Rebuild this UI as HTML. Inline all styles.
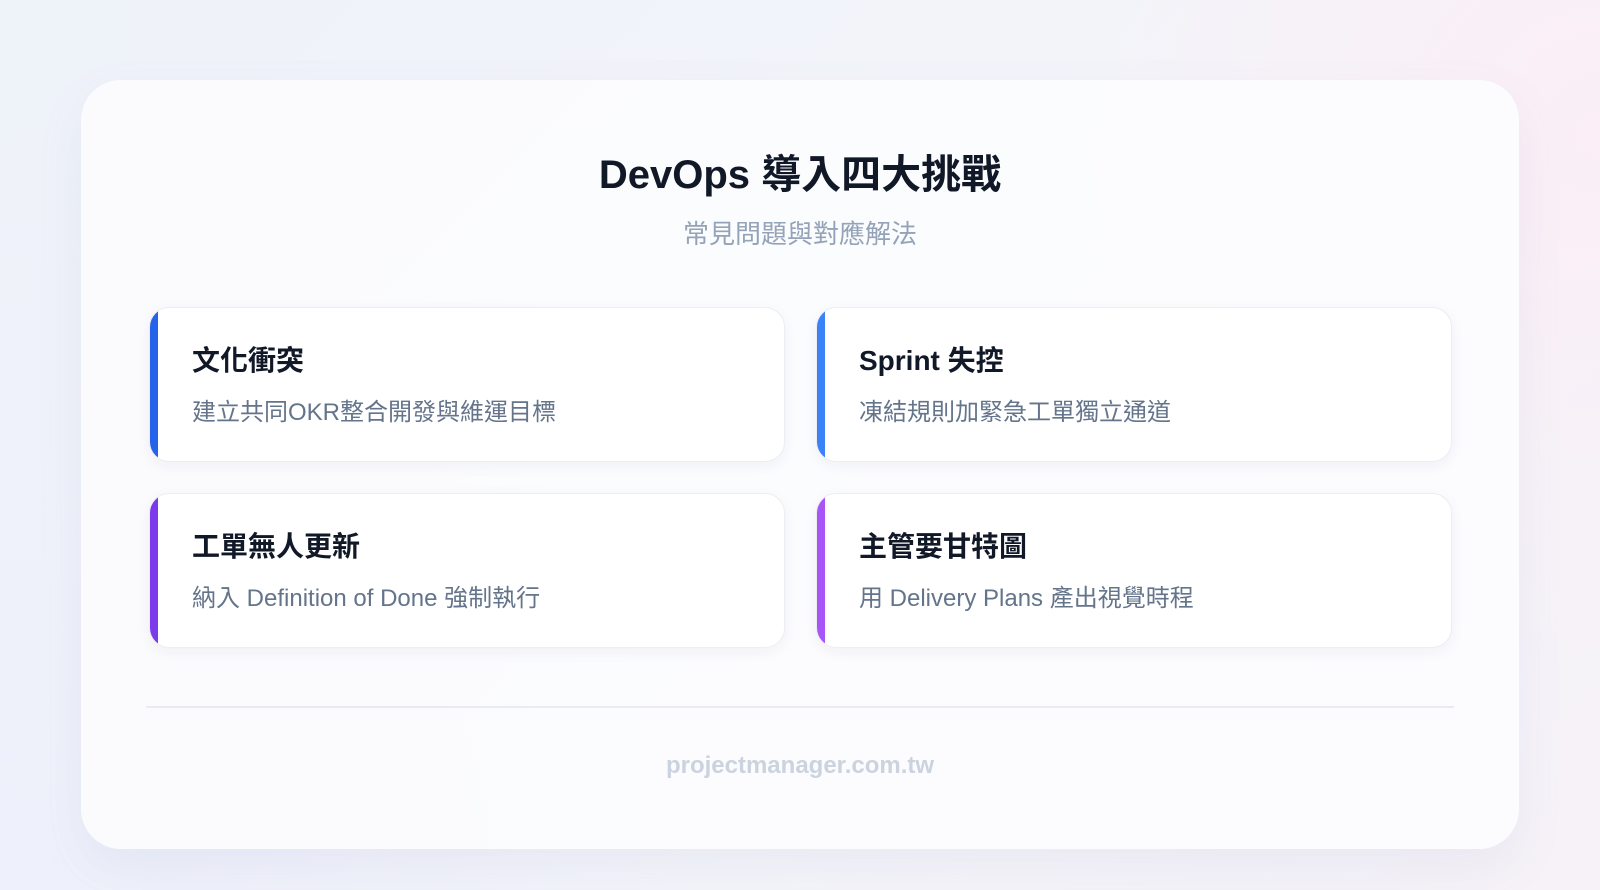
<!DOCTYPE html>
<html><head><meta charset="utf-8"><style>
*{margin:0;padding:0;box-sizing:border-box}
body{width:1600px;height:890px;overflow:hidden;font-family:"Liberation Sans","Noto Sans CJK TC",sans-serif;
background:radial-gradient(circle at 100% 15%,#fbeef6 0,transparent 30%),radial-gradient(circle at 0% 100%,#eef0fb 0,transparent 40%),linear-gradient(135deg,#eef2f9,#f4f5fa 60%,#f6f2f8);position:relative}
.main{position:absolute;left:81px;top:80px;width:1438px;height:769px;border-radius:40px;background:rgba(252,252,254,0.92);box-shadow:0 20px 50px rgba(100,110,160,0.08)}
h1{position:absolute;top:142px;left:0;width:1600px;text-align:center;font-size:40px;font-weight:700;color:#111827}
.sub{position:absolute;top:214px;left:0;width:1600px;text-align:center;font-size:26px;color:#94a3b8}
.card{position:absolute;width:636px;height:155px;background:#fff;border-radius:20px;border:1px solid #eceef2;box-shadow:0 4px 14px rgba(30,40,80,0.05);overflow:hidden}
.card::before{content:"";position:absolute;left:0;top:0;bottom:0;width:8px;background:var(--c)}
.card h3{position:absolute;left:42px;top:31px;font-size:28px;font-weight:700;color:#111827}
.card p{position:absolute;left:42px;top:84px;font-size:24px;color:#64748b}
.div{position:absolute;left:146px;top:706px;width:1308px;height:2px;background:#e9ebf0}
.foot{position:absolute;top:752px;left:0;width:1600px;text-align:center;font-size:24px;font-weight:700;color:#cbd3df}
</style></head><body>
<div class="main"></div>
<h1>DevOps 導入四大挑戰</h1>
<div class="sub">常見問題與對應解法</div>
<div class="card" style="left:149px;top:307px;--c:#2563eb"><h3>文化衝突</h3><p>建立共同OKR整合開發與維運目標</p></div>
<div class="card" style="left:816px;top:307px;--c:#3b82f6"><h3>Sprint 失控</h3><p>凍結規則加緊急工單獨立通道</p></div>
<div class="card" style="left:149px;top:493px;--c:#7c3aed"><h3>工單無人更新</h3><p>納入 Definition of Done 強制執行</p></div>
<div class="card" style="left:816px;top:493px;--c:#a855f7"><h3>主管要甘特圖</h3><p>用 Delivery Plans 產出視覺時程</p></div>
<div class="div"></div>
<div class="foot">projectmanager.com.tw</div>
</body></html>
